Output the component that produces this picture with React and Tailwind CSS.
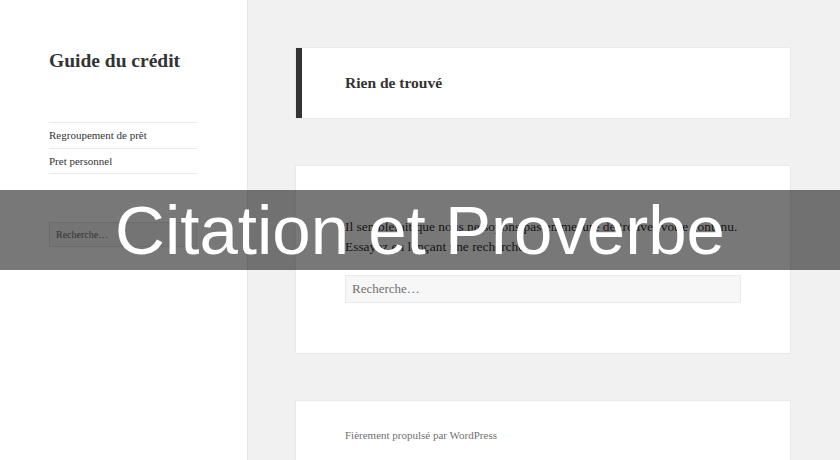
import React from 'react';

const serif = { fontFamily: '"Liberation Serif", "DejaVu Serif", serif' };

function Sidebar() {
  return (
    <div className="w-[247px] h-full bg-white shrink-0 shadow-[0_0_1px_rgba(0,0,0,0.25)] pl-[49px] pr-[50px] pt-[49px]">
      <h1 className="text-[19.5px] leading-[24px] font-bold text-[#333]">Guide du crédit</h1>

      {/* menu */}
      <ul className="mt-[49px] border-t border-[#eaeaea] text-[11px] text-[#333]">
        <li className="h-[26px] flex items-center border-b border-[#eaeaea]">Regroupement de prêt</li>
        <li className="h-[25px] flex items-center border-b border-[#eaeaea]">Pret personnel</li>
      </ul>

      <div className="mt-[48px] h-[25px] bg-[#f7f7f7] border border-[#e4e4e4] flex items-center px-[6px] text-[10px] text-[#707070]">
        Recherche…
      </div>
    </div>
  );
}

function Main() {
  return (
    <div className="flex-1 h-full pl-[49px] pr-[50px] pt-[48px] flex flex-col gap-[48px]">
      <div className="h-[70px] bg-white border-l-[6px] border-[#333] shadow-[0_0_1px_rgba(0,0,0,0.2)] flex items-center pl-[43px]">
        <h2 className="text-[15.5px] font-bold text-[#333]">Rien de trouvé</h2>
      </div>

      <div className="h-[187px] bg-white shadow-[0_0_1px_rgba(0,0,0,0.2)] px-[49px] pt-[51px]">
        <p className="text-[13.4px] leading-[20px] text-[#333]">
          Il semblerait que nous ne soyons pas en mesure de trouver votre contenu. Essayez en lançant une recherche.
        </p>
        <div className="mt-[18px] h-[28px] bg-[#f7f7f7] border border-[#eaeaea] flex items-center px-[6px] text-[13px] text-[#707070]">
          Recherche…
        </div>
      </div>

      <div className="flex-1 bg-white shadow-[0_0_1px_rgba(0,0,0,0.2)] px-[49px] pt-[26px]">
        <p className="text-[11px] text-[#707070]">Fièrement propulsé par WordPress</p>
      </div>
    </div>
  );
}

export default function App() {
  return (
    <div className="relative w-[840px] h-[460px] overflow-hidden bg-[#f1f1f1] flex" style={serif}>
      <Sidebar />
      <Main />

      {/* banner */}
      <div className="absolute left-0 right-0 top-[190px] h-[80px] bg-[rgba(0,0,0,0.53)] flex items-center justify-center">
        <span className="text-white text-[69px] leading-none" style={{ fontFamily: '"Liberation Sans", Arial, sans-serif' }}>
          Citation et Proverbe
        </span>
      </div>
    </div>
  );
}
